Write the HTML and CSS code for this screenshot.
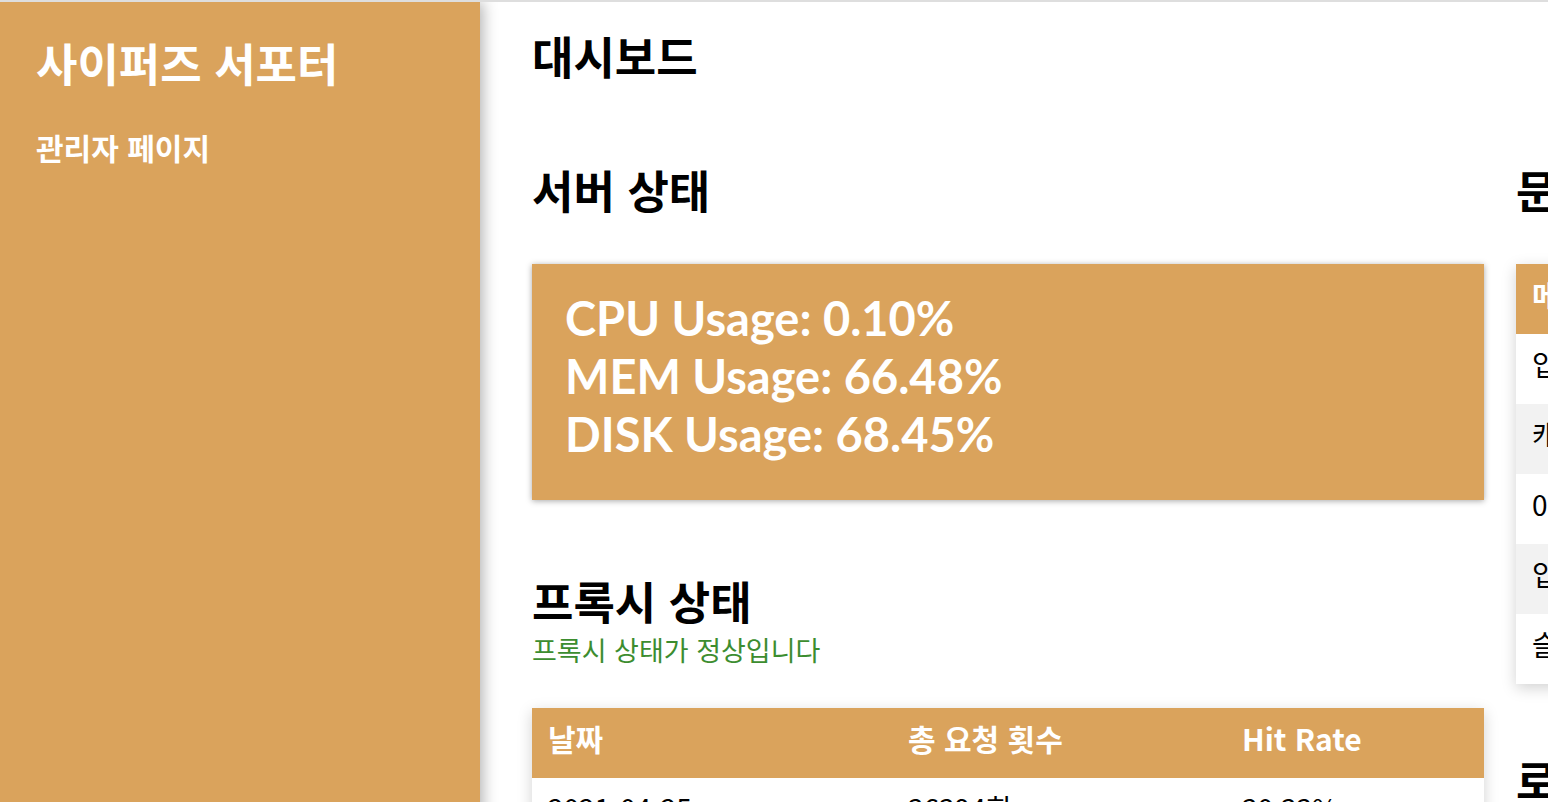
FILE: index.html
```html
<!DOCTYPE html>
<html lang="ko">
<head>
<meta charset="utf-8">
<title>사이퍼즈 서포터 - 관리자 페이지</title>
<link rel="stylesheet" href="styles.css">
</head>
<body>
<aside class="sidebar">
  <div class="brand">사이퍼즈 서포터</div>
  <div class="subtitle">관리자 페이지</div>
</aside>
<main class="main">
  <h1 class="page-title">대시보드</h1>
  <div class="columns">
    <section class="col-left">
      <h2 class="section-title">서버 상태</h2>
      <div class="server-card">
        <div>CPU Usage: 0.10%</div>
        <div>MEM Usage: 66.48%</div>
        <div>DISK Usage: 68.45%</div>
      </div>
      <h2 class="section-title proxy-title">프록시 상태</h2>
      <p class="status-ok">프록시 상태가 정상입니다</p>
      <table class="data-table proxy-table">
        <thead>
          <tr><th class="c1">날짜</th><th class="c2">총 요청 횟수</th><th class="c3">Hit Rate</th></tr>
        </thead>
        <tbody>
          <tr><td>2021-04-25</td><td>36394회</td><td>30.33%</td></tr>
          <tr><td>2021-04-24</td><td>41220회</td><td>28.17%</td></tr>
        </tbody>
      </table>
    </section>
    <section class="col-right">
      <h2 class="section-title">문의 사항</h2>
      <table class="data-table inquiry-table">
        <thead>
          <tr><th>메시지</th><th>작성자</th><th>날짜</th></tr>
        </thead>
        <tbody>
          <tr><td>입력이 안돼요</td><td>user01</td><td>2021-04-25</td></tr>
          <tr><td>캐릭터 검색 오류</td><td>user02</td><td>2021-04-24</td></tr>
          <tr><td>0점으로 나와요</td><td>user03</td><td>2021-04-23</td></tr>
          <tr><td>입장 오류</td><td>user04</td><td>2021-04-22</td></tr>
          <tr><td>슬롯 정보 오류</td><td>user05</td><td>2021-04-21</td></tr>
        </tbody>
      </table>
      <h2 class="section-title log-title">로그</h2>
    </section>
  </div>
</main>
</body>
</html>
```

FILE: styles.css
```css
html, body {
  margin: 0;
  padding: 0;
}
body {
  overflow: hidden;
  border-top: 2px solid #dedede;
  display: flex;
  align-items: stretch;
  min-height: 800px;
  font-family: "Noto Sans CJK KR", "Noto Sans", sans-serif;
  background: #ffffff;
  color: #000000;
}
.sidebar {
  flex: 0 0 480px;
  width: 480px;
  box-sizing: border-box;
  padding: 32px 36px;
  background: #daa35c;
  color: #ffffff;
  box-shadow: 3px 0 14px rgba(0, 0, 0, 0.3);
  position: relative;
  z-index: 1;
}
.brand {
  font-size: 45px;
  line-height: 58px;
  font-weight: 700;
}
.subtitle {
  margin-top: 38px;
  font-size: 30px;
  line-height: 34px;
  font-weight: 700;
}
.main {
  flex: 0 0 auto;
  padding: 29px 0 0 52px;
}
.page-title {
  margin: 0;
  font-size: 45px;
  line-height: 50px;
  font-weight: 700;
}
.columns {
  display: flex;
  gap: 32px;
  margin-top: 84px;
}
.col-left {
  flex: 0 0 952px;
  width: 952px;
}
.col-right {
  flex: 0 0 640px;
  width: 640px;
}
.section-title {
  margin: 0 0 49px 0;
  font-size: 45px;
  line-height: 50px;
  font-weight: 700;
}
.server-card {
  background: #daa35c;
  color: #ffffff;
  padding: 25px 33px 37px;
  font-family: Lato, "Noto Sans CJK KR", sans-serif;
  font-size: 47px;
  line-height: 58px;
  font-weight: 700;
  box-shadow: 0 1px 6px rgba(0, 0, 0, 0.35);
}
.proxy-title {
  margin-top: 76px;
  margin-bottom: 0;
}
.status-ok {
  margin: 8px 0 0 0;
  font-size: 27px;
  line-height: 31px;
  color: #3c8d2f;
}
.data-table {
  border-collapse: collapse;
  width: 100%;
  box-shadow: 0 4px 14px rgba(0, 0, 0, 0.18);
}
.proxy-table {
  margin-top: 43px;
}
.data-table th {
  height: 70px;
  box-sizing: border-box;
  padding: 0 16px 10px;
  background: #daa35c;
  color: #ffffff;
  font-size: 30px;
  font-weight: 700;
  text-align: left;
}
.data-table td {
  height: 70px;
  box-sizing: border-box;
  padding: 0 16px 10px;
  font-size: 28px;
  text-align: left;
  white-space: nowrap;
}
.data-table tbody tr:nth-child(even) td {
  background: #f2f2f2;
}
.c1 { width: 360px; }
.c2 { width: 334px; }
.c3 { width: 258px; }
.log-title {
  margin-top: 71px;
}
```
